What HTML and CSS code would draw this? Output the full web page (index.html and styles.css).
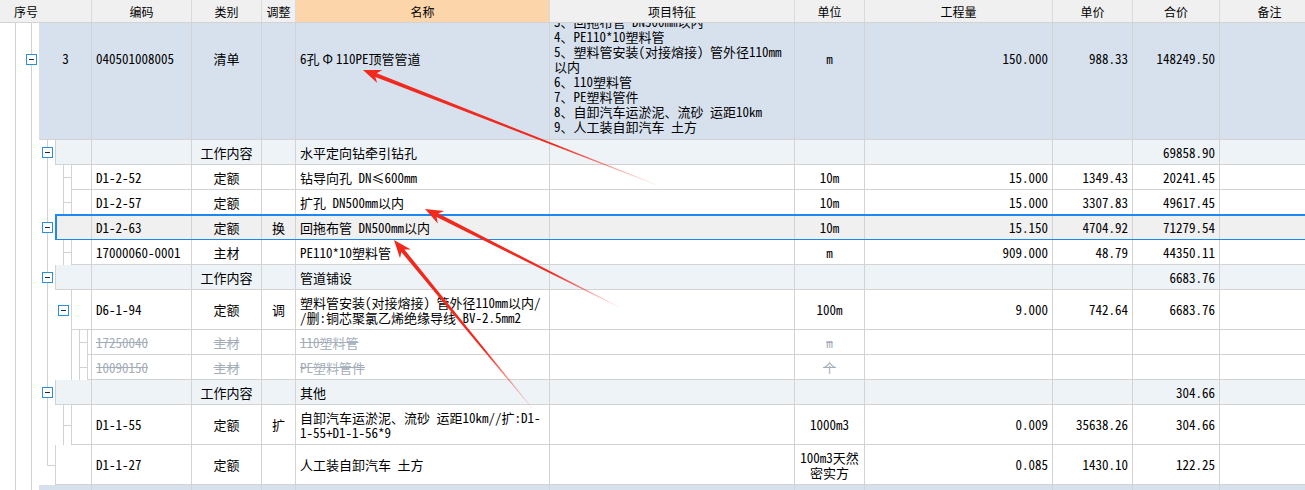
FILE: index.html
```html
<!DOCTYPE html>
<html lang="zh-CN">
<head>
<meta charset="utf-8">
<title>分部分项</title>
<link rel="stylesheet" href="styles.css">
</head>
<body>
<div class="grid">
  <div class="head">
    <div class="h h-no">序号</div>
    <div class="h h-code">编码</div>
    <div class="h h-type">类别</div>
    <div class="h h-adj">调整</div>
    <div class="h h-name">名称</div>
    <div class="h h-feat">项目特征</div>
    <div class="h h-unit">单位</div>
    <div class="h h-qty">工程量</div>
    <div class="h h-price">单价</div>
    <div class="h h-total">合价</div>
    <div class="h h-note">备注</div>
  </div>
  <div class="body">
    <div class="rows">
      <div class="row r162 qd">
        <div class="gut g1"><span class="tog"></span></div>
        <div class="cells">
          <div class="c c-no">3</div>
          <div class="c c-code">040501008005</div>
          <div class="c c-type">清单</div>
          <div class="c c-adj"></div>
          <div class="c c-name">6孔<span class="phi">Φ</span>110PE顶管管道</div>
          <div class="c c-feat"><div class="lines">
            <div>3、回拖布管 DN500mm以内</div>
            <div>4、PE110*10塑料管</div>
            <div>5、塑料管安装(对接熔接) 管外径110mm</div>
            <div>以内</div>
            <div>6、110塑料管</div>
            <div>7、PE塑料管件</div>
            <div>8、自卸汽车运淤泥、流砂 运距10km</div>
            <div>9、人工装自卸汽车 土方</div>
          </div></div>
          <div class="c c-unit">m</div>
          <div class="c c-qty">150.000</div>
          <div class="c c-price">988.33</div>
          <div class="c c-total">148249.50</div>
          <div class="c c-note"></div>
        </div>
      </div>

      <div class="row r25 work">
        <div class="gut g2"><span class="tog"></span></div>
        <div class="cells">
          <div class="c c-no"></div>
          <div class="c c-code"></div>
          <div class="c c-type">工作内容</div>
          <div class="c c-adj"></div>
          <div class="c c-name">水平定向钻牵引钻孔</div>
          <div class="c c-feat"></div>
          <div class="c c-unit"></div>
          <div class="c c-qty"></div>
          <div class="c c-price"></div>
          <div class="c c-total">69858.90</div>
          <div class="c c-note"></div>
        </div>
      </div>

      <div class="row r25">
        <div class="gut g3"></div>
        <div class="cells">
          <div class="c c-no"></div>
          <div class="c c-code">D1-2-52</div>
          <div class="c c-type">定额</div>
          <div class="c c-adj"></div>
          <div class="c c-name">钻导向孔 DN≤600mm</div>
          <div class="c c-feat"></div>
          <div class="c c-unit">10m</div>
          <div class="c c-qty">15.000</div>
          <div class="c c-price">1349.43</div>
          <div class="c c-total">20241.45</div>
          <div class="c c-note"></div>
        </div>
      </div>

      <div class="row r25">
        <div class="gut g3"></div>
        <div class="cells">
          <div class="c c-no"></div>
          <div class="c c-code">D1-2-57</div>
          <div class="c c-type">定额</div>
          <div class="c c-adj"></div>
          <div class="c c-name">扩孔 DN500mm以内</div>
          <div class="c c-feat"></div>
          <div class="c c-unit">10m</div>
          <div class="c c-qty">15.000</div>
          <div class="c c-price">3307.83</div>
          <div class="c c-total">49617.45</div>
          <div class="c c-note"></div>
        </div>
      </div>

      <div class="row r25 sel">
        <div class="gut g2"><span class="tog"></span></div>
        <div class="cells">
          <div class="c c-no"></div>
          <div class="c c-code">D1-2-63</div>
          <div class="c c-type">定额</div>
          <div class="c c-adj">换</div>
          <div class="c c-name">回拖布管 DN500mm以内</div>
          <div class="c c-feat"></div>
          <div class="c c-unit">10m</div>
          <div class="c c-qty">15.150</div>
          <div class="c c-price">4704.92</div>
          <div class="c c-total">71279.54</div>
          <div class="c c-note"></div>
        </div>
      </div>

      <div class="row r25">
        <div class="gut g3"></div>
        <div class="cells">
          <div class="c c-no"></div>
          <div class="c c-code">17000060-0001</div>
          <div class="c c-type">主材</div>
          <div class="c c-adj"></div>
          <div class="c c-name">PE110*10塑料管</div>
          <div class="c c-feat"></div>
          <div class="c c-unit">m</div>
          <div class="c c-qty">909.000</div>
          <div class="c c-price">48.79</div>
          <div class="c c-total">44350.11</div>
          <div class="c c-note"></div>
        </div>
      </div>

      <div class="row r25 work">
        <div class="gut g2"><span class="tog"></span></div>
        <div class="cells">
          <div class="c c-no"></div>
          <div class="c c-code"></div>
          <div class="c c-type">工作内容</div>
          <div class="c c-adj"></div>
          <div class="c c-name">管道铺设</div>
          <div class="c c-feat"></div>
          <div class="c c-unit"></div>
          <div class="c c-qty"></div>
          <div class="c c-price"></div>
          <div class="c c-total">6683.76</div>
          <div class="c c-note"></div>
        </div>
      </div>

      <div class="row r40">
        <div class="gut g3i"><span class="tog"></span></div>
        <div class="cells">
          <div class="c c-no"></div>
          <div class="c c-code">D6-1-94</div>
          <div class="c c-type">定额</div>
          <div class="c c-adj">调</div>
          <div class="c c-name"><div>塑料管安装(对接熔接) 管外径110mm以内/<br>/删:铜芯聚氯乙烯绝缘导线 BV-2.5mm2</div></div>
          <div class="c c-feat"></div>
          <div class="c c-unit">100m</div>
          <div class="c c-qty">9.000</div>
          <div class="c c-price">742.64</div>
          <div class="c c-total">6683.76</div>
          <div class="c c-note"></div>
        </div>
      </div>

      <div class="row r25 del">
        <div class="gut g4"></div>
        <div class="cells">
          <div class="c c-no"></div>
          <div class="c c-code"><span>17250040</span></div>
          <div class="c c-type"><span>主材</span></div>
          <div class="c c-adj"></div>
          <div class="c c-name"><span>110塑料管</span></div>
          <div class="c c-feat"></div>
          <div class="c c-unit"><span>m</span></div>
          <div class="c c-qty"></div>
          <div class="c c-price"></div>
          <div class="c c-total"></div>
          <div class="c c-note"></div>
        </div>
      </div>

      <div class="row r25 del">
        <div class="gut g4"></div>
        <div class="cells">
          <div class="c c-no"></div>
          <div class="c c-code"><span>10090150</span></div>
          <div class="c c-type"><span>主材</span></div>
          <div class="c c-adj"></div>
          <div class="c c-name"><span>PE塑料管件</span></div>
          <div class="c c-feat"></div>
          <div class="c c-unit"><span>个</span></div>
          <div class="c c-qty"></div>
          <div class="c c-price"></div>
          <div class="c c-total"></div>
          <div class="c c-note"></div>
        </div>
      </div>

      <div class="row r25 work">
        <div class="gut g2"><span class="tog"></span></div>
        <div class="cells">
          <div class="c c-no"></div>
          <div class="c c-code"></div>
          <div class="c c-type">工作内容</div>
          <div class="c c-adj"></div>
          <div class="c c-name">其他</div>
          <div class="c c-feat"></div>
          <div class="c c-unit"></div>
          <div class="c c-qty"></div>
          <div class="c c-price"></div>
          <div class="c c-total">304.66</div>
          <div class="c c-note"></div>
        </div>
      </div>

      <div class="row r40">
        <div class="gut g3"></div>
        <div class="cells">
          <div class="c c-no"></div>
          <div class="c c-code">D1-1-55</div>
          <div class="c c-type">定额</div>
          <div class="c c-adj">扩</div>
          <div class="c c-name"><div>自卸汽车运淤泥、流砂 运距10km//扩:D1-<br>1-55+D1-1-56*9</div></div>
          <div class="c c-feat"></div>
          <div class="c c-unit">1000m3</div>
          <div class="c c-qty">0.009</div>
          <div class="c c-price">35638.26</div>
          <div class="c c-total">304.66</div>
          <div class="c c-note"></div>
        </div>
      </div>

      <div class="row r40">
        <div class="gut g2e"></div>
        <div class="cells">
          <div class="c c-no"></div>
          <div class="c c-code">D1-1-27</div>
          <div class="c c-type">定额</div>
          <div class="c c-adj"></div>
          <div class="c c-name">人工装自卸汽车 土方</div>
          <div class="c c-feat"></div>
          <div class="c c-unit"><div>100m3天然<br>密实方</div></div>
          <div class="c c-qty">0.085</div>
          <div class="c c-price">1430.10</div>
          <div class="c c-total">122.25</div>
          <div class="c c-note"></div>
        </div>
      </div>

      <div class="row r25 qd">
        <div class="gut g1"></div>
        <div class="cells">
          <div class="c c-no"></div>
          <div class="c c-code"></div>
          <div class="c c-type"></div>
          <div class="c c-adj"></div>
          <div class="c c-name"></div>
          <div class="c c-feat"></div>
          <div class="c c-unit"></div>
          <div class="c c-qty"></div>
          <div class="c c-price"></div>
          <div class="c c-total"></div>
          <div class="c c-note"></div>
        </div>
      </div>
    </div>
  </div>
</div>

<svg class="arrows" width="1305" height="490" viewBox="0 0 1305 490">
  <defs>
    <linearGradient id="ga1" gradientUnits="userSpaceOnUse" x1="363" y1="70" x2="657" y2="185">
      <stop offset="0" stop-color="#f02a1e"/>
      <stop offset="0.65" stop-color="#f02a1e"/>
      <stop offset="1" stop-color="#f02a1e" stop-opacity="0.08"/>
    </linearGradient>
    <linearGradient id="ga2" gradientUnits="userSpaceOnUse" x1="425" y1="209" x2="619" y2="307">
      <stop offset="0" stop-color="#f02a1e"/>
      <stop offset="0.65" stop-color="#f02a1e"/>
      <stop offset="1" stop-color="#f02a1e" stop-opacity="0.08"/>
    </linearGradient>
    <linearGradient id="ga3" gradientUnits="userSpaceOnUse" x1="394" y1="240" x2="532" y2="408">
      <stop offset="0" stop-color="#f02a1e"/>
      <stop offset="0.65" stop-color="#f02a1e"/>
      <stop offset="1" stop-color="#f02a1e" stop-opacity="0.08"/>
    </linearGradient>
  </defs>
  <polygon fill="url(#ga1)" points="657.15,184.63 376.77,73.24 382.31,70.04 363,70 377.21,83.08 375.31,76.96 656.85,185.37"/>
  <polygon fill="url(#ga2)" points="619.18,306.64 438.39,213.56 444.22,210.91 425,209 437.88,223.39 436.57,217.12 618.82,307.36"/>
  <polygon fill="url(#ga3)" points="532.31,407.75 404.44,249.55 410.84,249.47 394,240 400.02,258.35 401.34,252.09 531.69,408.25"/>
</svg>
</body>
</html>
```

FILE: styles.css
```css
:root {
  --line: #d3d3d3;
  --gl: #d2d2d2;
}
* { box-sizing: border-box; margin: 0; padding: 0; }
html, body { width: 1305px; height: 490px; overflow: hidden; background: #fff; }
body {
  position: relative;
  font-family: "Noto Sans Mono CJK SC", "Liberation Mono", "Noto Sans CJK SC", monospace;
  font-size: 13px;
  line-height: 15px;
  color: #000;
}
.grid { display: flex; flex-direction: column; height: 490px; }

/* header */
.head {
  flex: none;
  display: flex;
  height: 23px;
  background: #f0f0f0;
  border-bottom: 1px solid var(--line);
  font-family: "Noto Sans CJK SC", "Liberation Sans", sans-serif;
  font-size: 12px;
  position: relative;
  z-index: 1;
}
.h { flex: none; display: flex; align-items: center; justify-content: center; border-right: 1px solid #dadada; }
.h-no { width: 92px; justify-content: flex-start; padding-left: 14px; }
.h-code { width: 100px; }
.h-type { width: 70px; }
.h-adj { width: 34px; }
.h-name { width: 254px; background: #fcd5ab; }
.h-feat { width: 245px; }
.h-unit { width: 70px; }
.h-qty { width: 188px; }
.h-price { width: 80px; }
.h-total { width: 87px; }
.h-note { width: 85px; border-right: none; padding-left: 14px; }

/* body */
.body { flex: 1; overflow: hidden; }
.rows { margin-top: -45px; }
.row { display: flex; position: relative; }
.r25 { height: 25px; }
.r40 { height: 40px; }
.r162 { height: 162px; }

.gut {
  flex: none;
  display: flex;
  align-items: center;
  justify-content: flex-end;
  background-repeat: no-repeat;
}
.g1 {
  width: 39px;
  background:
    linear-gradient(var(--gl), var(--gl)) 15px 0 / 1px 100% no-repeat,
    linear-gradient(var(--gl), var(--gl)) 31px 0 / 1px 100% no-repeat;
}
.g2 {
  width: 55px;
  background:
    linear-gradient(var(--gl), var(--gl)) 15px 0 / 1px 100% no-repeat,
    linear-gradient(var(--gl), var(--gl)) 31px 0 / 1px 100% no-repeat,
    linear-gradient(var(--gl), var(--gl)) 47px 0 / 1px 100% no-repeat;
}
.g2e {
  width: 55px;
  background:
    linear-gradient(var(--gl), var(--gl)) 15px 0 / 1px 100% no-repeat,
    linear-gradient(var(--gl), var(--gl)) 31px 0 / 1px 100% no-repeat,
    linear-gradient(var(--gl), var(--gl)) 47px 0 / 1px 50% no-repeat,
    linear-gradient(var(--gl), var(--gl)) 47px 50% / 8px 1px no-repeat;
}
.g3 {
  width: 71px;
  background:
    linear-gradient(var(--gl), var(--gl)) 15px 0 / 1px 100% no-repeat,
    linear-gradient(var(--gl), var(--gl)) 31px 0 / 1px 100% no-repeat,
    linear-gradient(var(--gl), var(--gl)) 47px 0 / 1px 100% no-repeat,
    linear-gradient(var(--gl), var(--gl)) 63px 0 / 1px 100% no-repeat,
    linear-gradient(var(--gl), var(--gl)) 63px 50% / 8px 1px no-repeat;
}
.g3i {
  width: 71px;
  background:
    linear-gradient(var(--gl), var(--gl)) 15px 0 / 1px 100% no-repeat,
    linear-gradient(var(--gl), var(--gl)) 31px 0 / 1px 100% no-repeat,
    linear-gradient(var(--gl), var(--gl)) 47px 0 / 1px 100% no-repeat;
}
.g4 {
  width: 87px;
  background:
    linear-gradient(var(--gl), var(--gl)) 15px 0 / 1px 100% no-repeat,
    linear-gradient(var(--gl), var(--gl)) 31px 0 / 1px 100% no-repeat,
    linear-gradient(var(--gl), var(--gl)) 47px 0 / 1px 100% no-repeat,
    linear-gradient(var(--gl), var(--gl)) 71px 0 / 1px 100% no-repeat,
    linear-gradient(var(--gl), var(--gl)) 79px 0 / 1px 100% no-repeat,
    linear-gradient(var(--gl), var(--gl)) 79px 50% / 8px 1px no-repeat;
}

.tog {
  position: relative;
  width: 11px;
  height: 11px;
  margin-right: 2px;
  border: 1px solid #2b8fdc;
  background: #fff;
}
.tog::before {
  content: "";
  position: absolute;
  left: 2px;
  top: 4px;
  width: 5px;
  height: 1px;
  background: #1b2a40;
}

.cells {
  flex: 1;
  display: flex;
  border-left: 1px solid var(--line);
  border-bottom: 1px solid var(--line);
  background: #fff;
}
.qd .cells { background: #d7e1ee; border-left-color: #d7e1ee; }
.work .cells { background: #eef3f8; }
.sel .cells { background: #f0f0f0; }

.c {
  flex: none;
  display: flex;
  align-items: center;
  padding: 0 4px;
  border-right: 1px solid var(--line);
  overflow: hidden;
  white-space: nowrap;
}
.c-no { flex: 1 1 0; justify-content: center; padding: 0; }
.c-code { width: 100px; }
.c-type { width: 70px; justify-content: center; }
.c-adj { width: 34px; justify-content: center; padding: 0; }
.c-name { width: 254px; }
.c-feat { width: 245px; }
.c-unit { width: 70px; justify-content: center; text-align: center; padding: 0 2px; }
.c-qty { width: 188px; justify-content: flex-end; }
.c-price { width: 80px; justify-content: flex-end; }
.c-total { width: 87px; justify-content: flex-end; }
.c-note { width: 85px; border-right: none; }

.lines { margin-top: 30px; }
.phi { padding: 0 3px; }

.del .c { color: #a3adb8; }
.del .c span { text-decoration: line-through; }

.sel::after {
  content: "";
  position: absolute;
  left: 55px;
  right: 0;
  top: -1px;
  bottom: 0;
  border: 2px solid #1e88f0;
  border-right: none;
  border-bottom-width: 1px;
  pointer-events: none;
}

.arrows { position: absolute; left: 0; top: 0; pointer-events: none; }
```
